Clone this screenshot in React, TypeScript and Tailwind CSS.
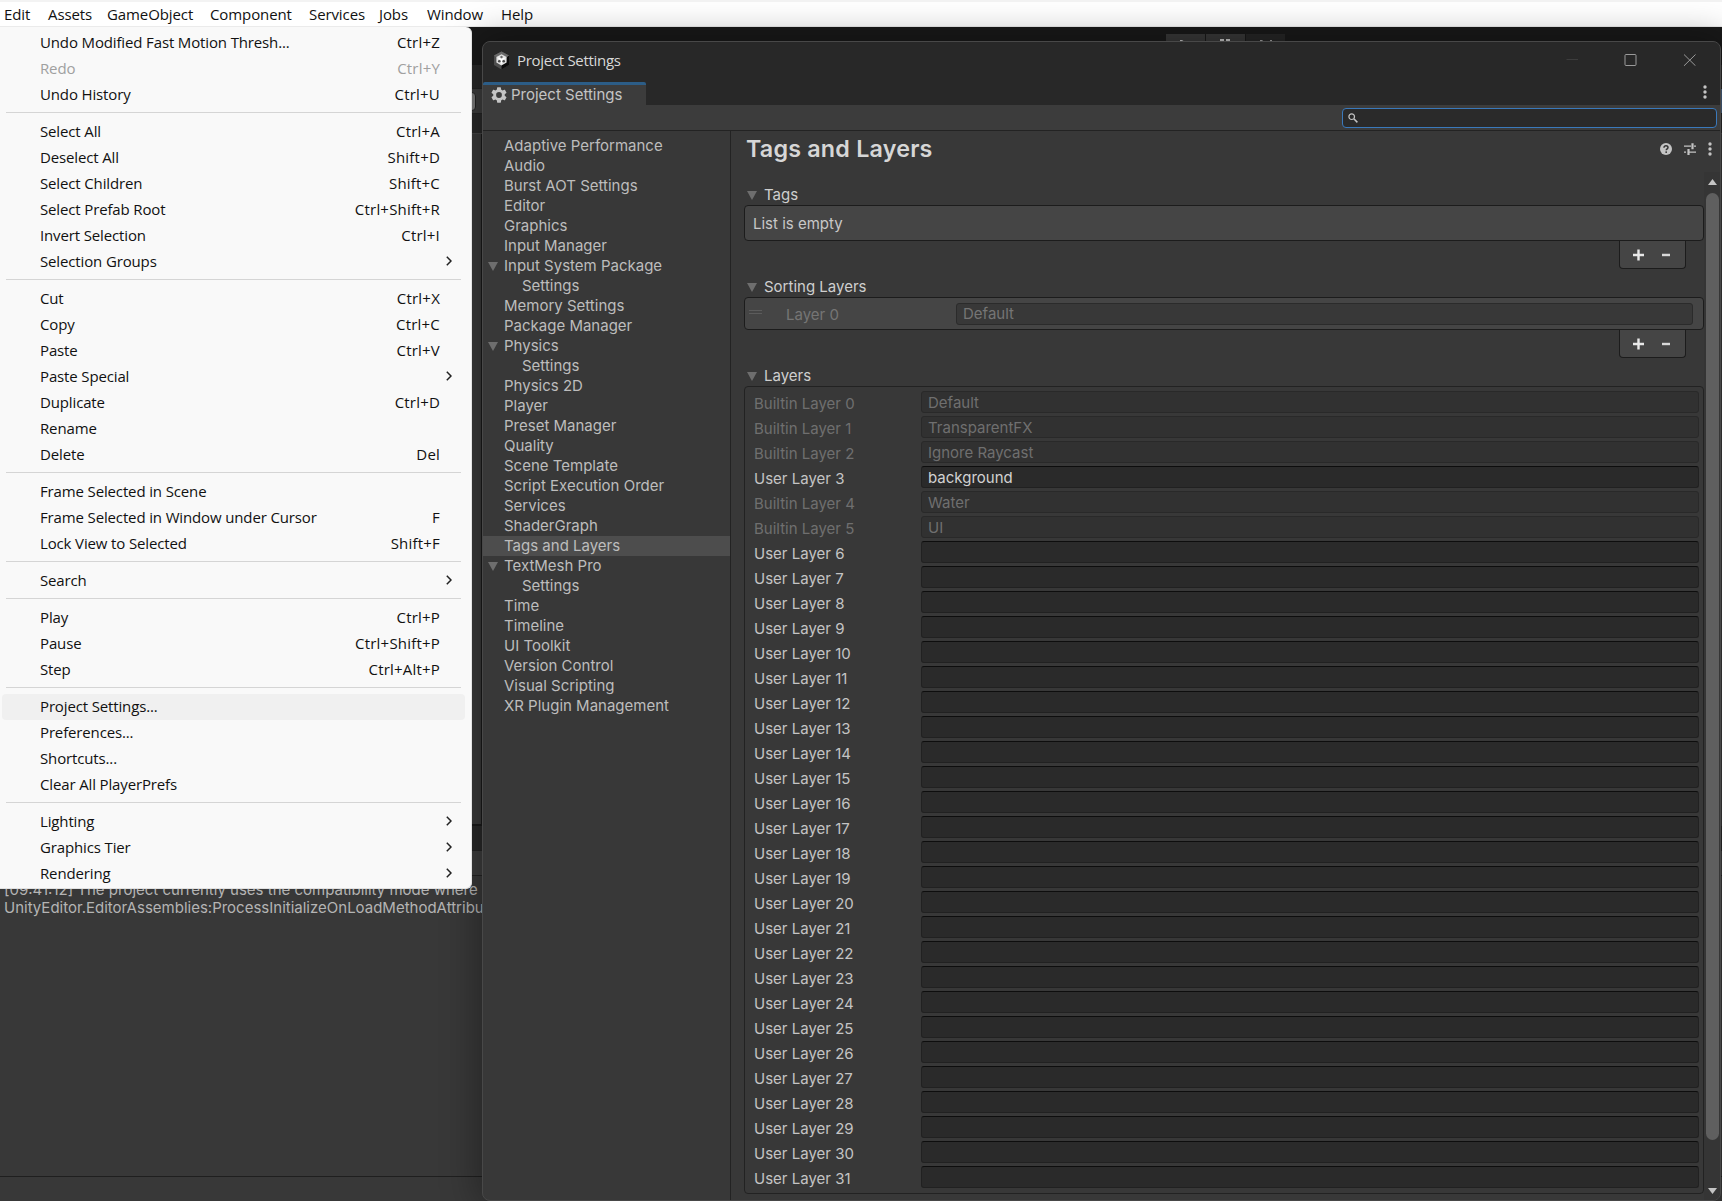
import type { ReactNode } from 'react';

interface MenuEntry {
  label: string;
  shortcut?: string;
  submenu?: boolean;
  disabled?: boolean;
  active?: boolean;
}

const menuBar = [
  { label: 'Edit', width: 'w-[44px]' },
  { label: 'Assets', width: 'w-[59px]' },
  { label: 'GameObject', width: 'w-[103px]' },
  { label: 'Component', width: 'w-[99px]' },
  { label: 'Services', width: 'w-[70px]' },
  { label: 'Jobs', width: 'w-[48px]' },
  { label: 'Window', width: 'w-[74px]' },
  { label: 'Help', width: 'w-[50px]' },
];

const editMenu: MenuEntry[][] = [
  [
    { label: 'Undo Modified Fast Motion Thresh...', shortcut: 'Ctrl+Z' },
    { label: 'Redo', shortcut: 'Ctrl+Y', disabled: true },
    { label: 'Undo History', shortcut: 'Ctrl+U' },
  ],
  [
    { label: 'Select All', shortcut: 'Ctrl+A' },
    { label: 'Deselect All', shortcut: 'Shift+D' },
    { label: 'Select Children', shortcut: 'Shift+C' },
    { label: 'Select Prefab Root', shortcut: 'Ctrl+Shift+R' },
    { label: 'Invert Selection', shortcut: 'Ctrl+I' },
    { label: 'Selection Groups', submenu: true },
  ],
  [
    { label: 'Cut', shortcut: 'Ctrl+X' },
    { label: 'Copy', shortcut: 'Ctrl+C' },
    { label: 'Paste', shortcut: 'Ctrl+V' },
    { label: 'Paste Special', submenu: true },
    { label: 'Duplicate', shortcut: 'Ctrl+D' },
    { label: 'Rename' },
    { label: 'Delete', shortcut: 'Del' },
  ],
  [
    { label: 'Frame Selected in Scene' },
    { label: 'Frame Selected in Window under Cursor', shortcut: 'F' },
    { label: 'Lock View to Selected', shortcut: 'Shift+F' },
  ],
  [{ label: 'Search', submenu: true }],
  [
    { label: 'Play', shortcut: 'Ctrl+P' },
    { label: 'Pause', shortcut: 'Ctrl+Shift+P' },
    { label: 'Step', shortcut: 'Ctrl+Alt+P' },
  ],
  [
    { label: 'Project Settings...', active: true },
    { label: 'Preferences...' },
    { label: 'Shortcuts...' },
    { label: 'Clear All PlayerPrefs' },
  ],
  [
    { label: 'Lighting', submenu: true },
    { label: 'Graphics Tier', submenu: true },
    { label: 'Rendering', submenu: true },
  ],
];

const settingsTree = [
  { label: 'Adaptive Performance' },
  { label: 'Audio' },
  { label: 'Burst AOT Settings' },
  { label: 'Editor' },
  { label: 'Graphics' },
  { label: 'Input Manager' },
  { label: 'Input System Package', open: true },
  { label: 'Settings', child: true },
  { label: 'Memory Settings' },
  { label: 'Package Manager' },
  { label: 'Physics', open: true },
  { label: 'Settings', child: true },
  { label: 'Physics 2D' },
  { label: 'Player' },
  { label: 'Preset Manager' },
  { label: 'Quality' },
  { label: 'Scene Template' },
  { label: 'Script Execution Order' },
  { label: 'Services' },
  { label: 'ShaderGraph' },
  { label: 'Tags and Layers', selected: true },
  { label: 'TextMesh Pro', open: true },
  { label: 'Settings', child: true },
  { label: 'Time' },
  { label: 'Timeline' },
  { label: 'UI Toolkit' },
  { label: 'Version Control' },
  { label: 'Visual Scripting' },
  { label: 'XR Plugin Management' },
];

const builtinLayers: Record<number, string> = {
  0: 'Default',
  1: 'TransparentFX',
  2: 'Ignore Raycast',
  4: 'Water',
  5: 'UI',
};

const layers = Array.from({ length: 32 }, (_, i) => ({
  index: i,
  builtin: i in builtinLayers,
  value: i === 3 ? 'background' : builtinLayers[i] ?? '',
}));

function Triangle() {
  return (
    <svg width="10" height="9" viewBox="0 0 10 9" className="shrink-0">
      <path d="M0 0H10L5 9Z" fill="#6e6e6e" />
    </svg>
  );
}

function Dots() {
  return (
    <svg width="4" height="14" viewBox="0 0 4 14" className="shrink-0">
      <circle cx="2" cy="2" r="1.7" fill="#c4c4c4" />
      <circle cx="2" cy="7" r="1.7" fill="#c4c4c4" />
      <circle cx="2" cy="12" r="1.7" fill="#c4c4c4" />
    </svg>
  );
}

function GearIcon() {
  return (
    <svg width="16" height="16" viewBox="2 2 20 20" className="shrink-0">
      <path
        fill="#c4c4c4"
        d="M19.14 12.94c.04-.3.06-.61.06-.94s-.02-.64-.07-.94l2.03-1.58a.49.49 0 0 0 .12-.61l-1.92-3.32a.49.49 0 0 0-.59-.22l-2.39.96a7 7 0 0 0-1.62-.94l-.36-2.54a.48.48 0 0 0-.48-.41h-3.84a.48.48 0 0 0-.47.41l-.36 2.54c-.59.24-1.13.57-1.62.94l-2.39-.96a.48.48 0 0 0-.59.22L2.74 8.87a.47.47 0 0 0 .12.61l2.03 1.58c-.05.3-.09.63-.09.94s.02.64.07.94l-2.03 1.58a.49.49 0 0 0-.12.61l1.92 3.32c.12.22.37.29.59.22l2.39-.96c.5.38 1.03.7 1.62.94l.36 2.54c.05.24.24.41.48.41h3.84c.24 0 .44-.17.47-.41l.36-2.54a7 7 0 0 0 1.62-.94l2.39.96c.22.08.47 0 .59-.22l1.92-3.32a.47.47 0 0 0-.12-.61zM12 15.6a3.6 3.6 0 1 1 0-7.2 3.6 3.6 0 0 1 0 7.2"
      />
    </svg>
  );
}

function UnityIcon() {
  return (
    <svg width="17" height="19" viewBox="0 0 17 19" className="shrink-0">
      <path d="M8.5 0.5L16 4.5V14L8.5 18.5L1 14V4.5Z" fill="#4e4e4e" />
      <path d="M8.5 9.5L16 4.5V14L8.5 18.5Z" fill="#0c0c0c" />
      <path d="M8.5 0.5L16 4.5L8.5 9.5L1 4.5Z" fill="#6a6a6a" />
      <path d="M8.5 3.2L13.6 6V11.6L8.5 14.4L3.4 11.6V6Z" fill="#e2e2e2" />
      <path d="M8.5 8.8V12.6M8.5 8.8L5.4 7M8.5 8.8L11.6 7" stroke="#fff" strokeWidth="1.3" />
      <circle cx="6.3" cy="10.3" r="1.3" fill="#4a4a4a" />
      <circle cx="10.7" cy="10.3" r="1.3" fill="#4a4a4a" />
      <circle cx="8.5" cy="6" r="1.2" fill="#6a6a6a" />
    </svg>
  );
}

function MenuRow({ label, shortcut, submenu, disabled, active }: MenuEntry) {
  return (
    <div
      className={`ml-0.5 mr-[6px] flex h-[26px] items-center justify-between rounded pb-0.5 pl-[38px] pr-[25px] ${
        active ? 'bg-[#f0f0f0]' : ''
      } ${disabled ? 'text-[#a0a0a0]' : 'text-[#111]'}`}
    >
      <span className="tracking-[-0.14px]">{label}</span>
      {shortcut && <span className="tracking-[0.2px]">{shortcut}</span>}
      {submenu && (
        <svg width="6" height="10" viewBox="0 0 6 10" className="-mr-[12px]">
          <path d="M0.8 0.8L5 5L0.8 9.2" fill="none" stroke="#222" strokeWidth="1.5" />
        </svg>
      )}
    </div>
  );
}

function EditMenu() {
  return (
    <div className="absolute left-0 top-[27px] z-20 w-[472px] rounded-r-md border-r border-b border-[#e2e2e2] bg-[#f9f9f9] pb-px pt-[3px]">
      {editMenu.map((group, i) => (
        <div key={i}>
          {i > 0 && (
            <div className="h-[11px] pl-1.5 pr-[10px] pt-1">
              <div className="h-px bg-[#d5d5d5]" />
            </div>
          )}
          {group.map((entry) => (
            <MenuRow key={entry.label} {...entry} />
          ))}
        </div>
      ))}
    </div>
  );
}

function Foldout({ title, className }: { title: string; className: string }) {
  return (
    <div className={`flex h-[22px] items-center pl-[3px] text-[#cfcfcf] ${className}`}>
      <Triangle />
      <span className="ml-[7px]">{title}</span>
    </div>
  );
}

function ListBox({ className, children }: { className: string; children: ReactNode }) {
  return (
    <div className={`flex items-center rounded border border-[#1c1c1c] bg-[#454545] ${className}`}>
      {children}
    </div>
  );
}

function AddRemove() {
  return (
    <div className="ml-[875px] flex h-[28px] w-[67px] items-center rounded-b border border-t-0 border-[#1c1c1c] bg-[#454545] pl-[13px]">
      <svg width="39" height="12" viewBox="0 0 39 12">
        <path d="M5.5 0.5V11.5M0 6H11" stroke="#e8e8e8" strokeWidth="2.4" />
        <path d="M29 6H37" stroke="#d8d8d8" strokeWidth="2.4" />
      </svg>
    </div>
  );
}

function SettingsSidebar() {
  return (
    <div className="w-[248px] shrink-0 border-r border-[#232323] pt-[5px] text-[#bdbdbd]">
      {settingsTree.map((item, i) => (
        <div
          key={i}
          className={`flex h-5 items-center ${item.selected ? 'bg-[#4d4d4d]' : ''} ${
            item.child ? 'pl-[39px]' : item.open ? 'pl-[5px]' : 'pl-[21px]'
          }`}
        >
          {item.open && (
            <span className="mr-1.5 flex">
              <Triangle />
            </span>
          )}
          <span>{item.label}</span>
        </div>
      ))}
    </div>
  );
}

function Scrollbar() {
  return (
    <div className="flex w-4 flex-col items-center bg-[#353535] pb-[6px] pt-[7px]">
      <svg width="9" height="6" viewBox="0 0 9 6">
        <path d="M4.5 0L9 6H0Z" fill="#c4c4c4" />
      </svg>
      <div className="mt-[8px] h-[947px] w-[13px] rounded-full bg-[#5f5f5f]" />
      <svg width="9" height="6" viewBox="0 0 9 6" className="mt-auto">
        <path d="M0 0H9L4.5 6Z" fill="#c4c4c4" />
      </svg>
    </div>
  );
}

function LayerRow({ index, builtin, value }: { index: number; builtin: boolean; value: string }) {
  return (
    <div className={`flex h-[25px] ${builtin ? 'text-[#6f6f6f]' : 'text-[#c4c4c4]'}`}>
      <span className="w-[167px] pt-[2px] leading-[22px]">
        {builtin ? 'Builtin' : 'User'} Layer {index}
      </span>
      <div
        className={`h-[22px] w-[778px] rounded-[3px] border pl-[6px] leading-[21px] ${
          builtin ? 'border-[#292929] bg-[#313131]' : 'border-[#212121] border-t-[#0d0d0d] bg-[#2a2a2a] text-[#d2d2d2]'
        }`}
      >
        {value}
      </div>
    </div>
  );
}

function TagsAndLayers() {
  return (
    <div className="flex min-w-0 grow flex-col">
      <div className="flex h-[41px] items-start justify-between pl-[15px] pr-2 pt-[3px]">
        <h1 className="text-[23.3px] font-semibold leading-[29px] tracking-[0.2px] text-[#d6d6d6]">Tags and Layers</h1>
        <div className="flex h-[29px] items-center">
          <svg width="12" height="12" viewBox="0 0 12 12">
            <circle cx="6" cy="6" r="6" fill="#c4c4c4" />
            <path d="M4 4.7C4 3.4 4.8 2.8 6 2.8S8 3.5 8 4.6C8 5.8 6.2 5.9 6.2 7.3" fill="none" stroke="#333" strokeWidth="1.5" />
            <rect x="5.4" y="8.4" width="1.6" height="1.5" fill="#333" />
          </svg>
          <svg width="12" height="12" viewBox="0 0 12 12" className="ml-3">
            <path d="M0 3.2H7M10 3.2H12M0 9.2H2M5 9.2H12" stroke="#c4c4c4" strokeWidth="1.3" />
            <path d="M8.5 0.3V6.2M4.5 6V12" stroke="#c4c4c4" strokeWidth="2.2" />
          </svg>
          <span className="ml-3 flex">
            <Dots />
          </span>
        </div>
      </div>
      <div className="flex grow">
        <div className="w-[973px] shrink-0 pl-[13px] pt-[12px]">
          <Foldout title="Tags" className="" />
          <ListBox className="-mt-px h-9 w-[960px] pl-2 pt-0.5 text-[#c8c8c8]">List is empty</ListBox>
          <AddRemove />
          <Foldout title="Sorting Layers" className="mt-[7px]" />
          <ListBox className="-mt-px h-[33px] w-[960px] pl-1 text-[#757575]">
            <span className="-mt-1 h-1 w-[13px] border-y border-[#5c5c5c]" />
            <span className="ml-6 mt-1 w-[170px]">Layer 0</span>
            <span className="h-[22px] w-[737px] rounded-[3px] border border-[#2b2b2b] bg-[#383838] pl-[6px] leading-[20px]">
              Default
            </span>
          </ListBox>
          <AddRemove />
          <Foldout title="Layers" className="mt-[7px]" />
          <div className="-mt-px w-[960px] rounded border border-[#222] pb-[2px] pl-[9px] pt-1">
            {layers.map((layer) => (
              <LayerRow key={layer.index} {...layer} />
            ))}
          </div>
        </div>
        <Scrollbar />
      </div>
    </div>
  );
}

function SettingsWindow() {
  return (
    <div className="absolute left-[482px] top-[41px] z-10 flex h-[1160px] w-[1239px] flex-col overflow-hidden rounded-lg border border-[#484848] bg-[#383838] shadow-[0_0_36px_4px_rgba(0,0,0,0.35)]">
      <div className="flex h-10 shrink-0 items-center bg-[#282828] pb-1 pl-[10px] font-['Open_Sans',sans-serif] text-[15px] text-[#d8d8d8]">
        <UnityIcon />
        <span className="ml-[7px] tracking-[-0.3px]">Project Settings</span>
        <svg width="130" height="12" viewBox="0 0 130 12" className="ml-auto mr-[24px]" fill="none">
          <path d="M0.5 5.5H12" stroke="#3d3d3d" />
          <rect x="59" y="0.5" width="11" height="11" rx="1" stroke="#9a9a9a" />
          <path d="M118 0.5L129.5 11.8M129.5 0.5L118 11.8" stroke="#9a9a9a" />
        </svg>
      </div>
      <div className="flex h-[23px] shrink-0 items-start justify-between bg-[#282828] pr-[13px]">
        <div className="flex h-[23px] w-[163px] items-center rounded-t-[2px] border-t-[3px] border-[#2c5d87] bg-[#3c3c3c] pl-2 text-[#c4c4c4]">
          <GearIcon />
          <span className="ml-1">Project Settings</span>
        </div>
        <span className="mt-[3px] flex">
          <Dots />
        </span>
      </div>
      <div className="flex h-[26px] shrink-0 items-start justify-end border-b border-[#232323] bg-[#3c3c3c] pr-[3px] pt-[3px]">
        <div className="flex h-5 w-[375px] items-center rounded border border-[#3a79bb] bg-[#2a2a2a] pl-[5px]">
          <svg width="10" height="10" viewBox="0 0 10 10" fill="none" stroke="#c4c4c4">
            <circle cx="3.7" cy="3.7" r="2.8" strokeWidth="1.2" />
            <path d="M5.8 5.8L9.4 9.4" strokeWidth="1.5" />
          </svg>
        </div>
      </div>
      <div className="flex grow">
        <SettingsSidebar />
        <TagsAndLayers />
      </div>
    </div>
  );
}

// Editor chrome that stays visible behind the menu and the settings window
function EditorBackdrop() {
  return (
    <div className="flex grow flex-col bg-[#383838] text-[#b4b4b4]">
      <div className="flex h-[38px] shrink-0 items-start gap-px bg-[#191919] pl-[1166px] pt-[7px]">
        <div className="flex h-[22px] w-[39px] justify-center bg-[#383838] pt-[6px]">
          <svg width="12" height="12" viewBox="0 0 12 12">
            <path d="M0 0H2L11 6L0 12Z" fill="#c4c4c4" />
          </svg>
        </div>
        <div className="flex h-[22px] w-[39px] justify-center bg-[#383838] pt-[5px]">
          <svg width="11" height="12" viewBox="0 0 11 12">
            <path d="M0 0H4V12H0ZM6 0H10V12H6Z" fill="#c4c4c4" />
          </svg>
        </div>
        <div className="flex h-[22px] w-[39px] justify-center bg-[#262626] pt-[6px]">
          <svg width="12" height="12" viewBox="0 0 12 12">
            <path d="M0 0H2L9 6L0 12ZM10 0H12V12H10Z" fill="#a0a0a0" />
          </svg>
        </div>
      </div>
      <div className="h-[23px] shrink-0 bg-[#282828]" />
      <div className="flex h-[26px] shrink-0 items-center justify-between border-y border-[#232323] bg-[#3c3c3c] pl-[460px]">
        <div className="h-[19px] w-[16px] rounded border border-[#222] bg-[#7a7a7a]" />
        <div className="h-6 w-1 bg-[#46607c]" />
      </div>
      <div className="h-[20px] shrink-0 border-b border-[#444] bg-[#282828]" />
      <div className="h-[692px] w-[482px] shrink-0 border-b-2 border-r border-[#191919]" />
      <div className="h-[24px] shrink-0 bg-[#282828]" />
      <div className="h-[26px] shrink-0 border-y border-[#232323] bg-[#3c3c3c]" />
      <div className="h-[301px] shrink-0 overflow-hidden whitespace-nowrap border-b border-[#1f1f1f] pl-1 pt-[5px] leading-[18px]">
        <p>[09:41:12] The project currently uses the compatibility mode where</p>
        <p>UnityEditor.EditorAssemblies:ProcessInitializeOnLoadMethodAttributes ()</p>
      </div>
    </div>
  );
}

export default function App() {
  return (
    <div className="relative flex h-[1201px] w-[1722px] flex-col overflow-hidden bg-[#383838] font-[Inter,sans-serif] text-[15px]">
      <div className="flex h-[27px] shrink-0 items-center border-b border-t-2 border-b-[#ebebeb] border-t-[#f3f3f3] bg-white pl-1 font-['Open_Sans',sans-serif] text-[15px] tracking-[-0.1px] text-[#111]">
        {menuBar.map((item) => (
          <span key={item.label} className={item.width}>
            {item.label}
          </span>
        ))}
      </div>
      <EditorBackdrop />
      <SettingsWindow />
      <div className="font-['Open_Sans',sans-serif] text-[15px]">
        <EditMenu />
      </div>
    </div>
  );
}
